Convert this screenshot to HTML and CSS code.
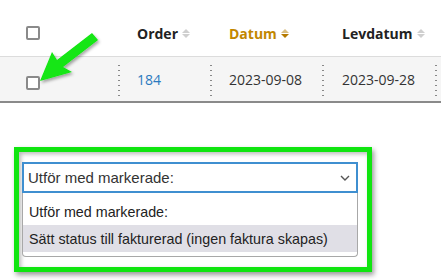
FILE: index.html
```html
<!DOCTYPE html>
<html lang="sv">
<head>
<meta charset="utf-8">
<link rel="stylesheet" href="styles.css">
</head>
<body>
<div class="page">
  <div class="grid">
    <div class="row head">
      <div class="cell c0"><span class="cb"></span></div>
      <div class="cell c1"><span class="th">Order</span><span class="sort"><i class="up"></i><i class="dn"></i></span></div>
      <div class="cell c2"><span class="th active">Datum</span><span class="sort act"><i class="up"></i><i class="dn"></i></span></div>
      <div class="cell c3"><span class="th">Levdatum</span><span class="sort"><i class="up"></i><i class="dn"></i></span></div>
      <div class="cell c4"></div>
    </div>
    <div class="row body">
      <div class="cell c0 sep"><span class="cb"></span></div>
      <div class="cell c1 sep"><a class="link">184</a></div>
      <div class="cell c2 sep">2023-09-08</div>
      <div class="cell c3 sep">2023-09-28</div>
      <div class="cell c4"></div>
    </div>
  </div>

  <div class="panel">
    <div class="select">
      <span>Utför med markerade:</span>
      <svg class="chev" width="10" height="6" viewBox="0 0 10 6"><path d="M1 1 L5 5 L9 1" fill="none" stroke="#555" stroke-width="1.4"/></svg>
    </div>
    <div class="list">
      <div class="opt">Utför med markerade:</div>
      <div class="opt hl">Sätt status till fakturerad (ingen faktura skapas)</div>
    </div>
  </div>

  <svg class="arrow" width="80" height="70" viewBox="0 0 80 70">
    <defs>
      <filter id="sh" x="-20%" y="-20%" width="150%" height="150%">
        <feDropShadow dx="1.5" dy="2" stdDeviation="1.5" flood-color="#000" flood-opacity="0.35"/>
      </filter>
    </defs>
    <polygon filter="url(#sh)" fill="#12e612" points="76,14 70,7 35,34 30,26 18,55 50,46 41,41"/>
  </svg>
</div>
</body>
</html>
```

FILE: styles.css
```css
* { box-sizing: border-box; }
html, body { margin: 0; padding: 0; background: #fff; }
.page { position: relative; width: 441px; height: 280px; overflow: hidden; font-family: "Open Sans", "Noto Sans", sans-serif; }

.grid { width: 460px; }
.row { display: flex; }
.head { height: 57px; border-bottom: 1px solid #dcdcdc; align-items: center; }
.body { height: 46px; background: #f5f5f5; border-bottom: 2px solid #8a8a8a; align-items: center; }

.cell { height: 100%; display: flex; align-items: center; font-size: 14px; color: #333; position: relative; }
.c0 { width: 120px; padding-left: 26px; }
.c1 { width: 92px; padding-left: 17px; }
.c2 { width: 112px; padding-left: 17px; }
.c3 { width: 113px; padding-left: 18px; }
.c4 { flex: 1; }
.head .cell { padding-top: 10px; }
.body .cell { padding-top: 1px; }

.sep::after { content: ""; position: absolute; right: 0; top: 6px; bottom: 4px; width: 2px; background-image: radial-gradient(circle, #888 0.8px, transparent 1px); background-size: 2px 5px; background-repeat: repeat-y; }
.body .c0.sep { padding-top: 8px; }

.cb { display: block; width: 14px; height: 14px; border: 2px solid #8a8a8a; border-radius: 2px; background: #fff; }

.th { font-weight: 700; color: #222; font-size: 14px; }
.th.active { color: #c28700; }
.link { color: #2a7ac0; }

.sort { display: inline-flex; flex-direction: column; gap: 1px; margin-left: 4px; margin-top: 1px; }
.sort i { display: block; width: 0; height: 0; border-left: 4px solid transparent; border-right: 4px solid transparent; }
.sort .up { border-bottom: 4px solid #cfcfcf; }
.sort .dn { border-top: 4px solid #cfcfcf; }
.sort.act .up { border-bottom-color: #d9bd80; }
.sort.act .dn { border-top-color: #b57a00; }

.panel { margin: 44px 0 0 14px; width: 358px; height: 125px; border: 5px solid #10e510; background: #fff; padding: 10px 9px 10px 3px; box-shadow: 2px 3px 5px rgba(0,0,0,0.4), inset 2px 2px 4px rgba(0,0,0,0.28); font-family: "Liberation Sans", Arial, sans-serif; }
.select { height: 31px; border: 2px solid #3f8fd0; display: flex; align-items: center; justify-content: space-between; padding: 0 6px 0 4px; font-size: 15px; color: #333; background: #fff; }
.chev { margin-top: 1px; }
.list { border: 1px solid #a8a8a8; border-top: none; border-radius: 0 0 4px 4px; padding: 5px 0 4px; background: #fff; }
.opt { height: 27px; display: flex; align-items: center; padding-left: 6px; font-size: 14.3px; color: #222; }
.opt.hl { background: #e0dfe6; }

.arrow { position: absolute; left: 22px; top: 26px; }
```
